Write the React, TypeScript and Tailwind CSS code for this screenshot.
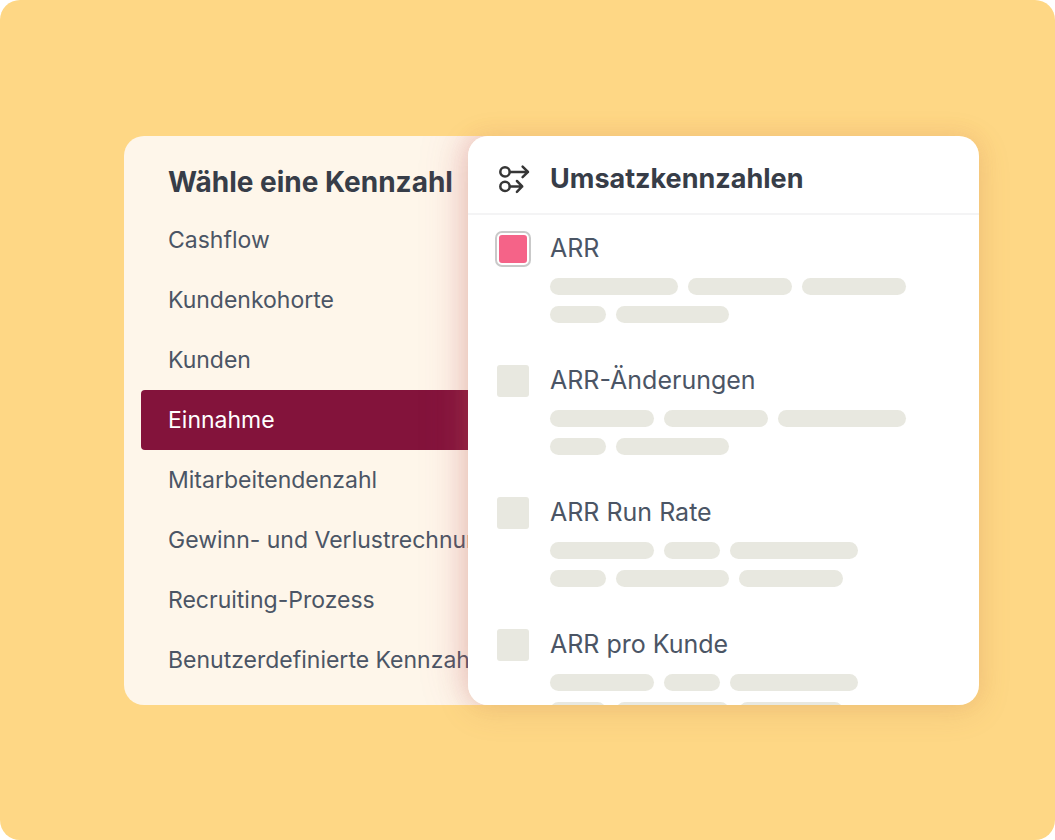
import React from 'react';

const categories = [
  'Cashflow',
  'Kundenkohorte',
  'Kunden',
  'Einnahme',
  'Mitarbeitendenzahl',
  'Gewinn- und Verlustrechnung',
  'Recruiting-Prozess',
  'Benutzerdefinierte Kennzahlen',
];

const bar = {
  s: 'w-14',
  m: 'w-[104px]',
  l: 'w-[113px]',
  xl: 'w-32',
};

type Bar = keyof typeof bar;

const metrics: { id: string; name: string; rows: Bar[][] }[] = [
  { id: 'arr', name: 'ARR', rows: [['xl', 'm', 'm'], ['s', 'l']] },
  { id: 'arr-changes', name: 'ARR-Änderungen', rows: [['m', 'm', 'xl'], ['s', 'l']] },
  { id: 'arr-run-rate', name: 'ARR Run Rate', rows: [['m', 's', 'xl'], ['s', 'l', 'm']] },
  { id: 'arr-customer', name: 'ARR pro Kunde', rows: [['m', 's', 'xl'], ['s', 'l', 'm']] },
];

function FlowIcon() {
  return (
    <svg
      className="h-8 w-8 shrink-0"
      viewBox="0 0 32 32"
      fill="none"
      stroke="#363636"
      strokeWidth="2.5"
      strokeLinecap="round"
      strokeLinejoin="round"
      aria-hidden="true"
    >
      <circle cx="7" cy="8.900" r="4.700" />
      <path d="M12 8.900H30M24.600 3.600l5.400 5.300-5.400 5.300" />
      <circle cx="7" cy="23.400" r="4.700" />
      <path d="M12 23.400H24.200M18.900 18l5.300 5.400-5.300 5.400" />
    </svg>
  );
}

export default function App() {
  const [active, setActive] = React.useState('Einnahme');

  return (
    <main className="min-h-screen overflow-hidden rounded-[20px] bg-[#fed785] pt-[136px] pr-[76px] pb-[135px] pl-[124px] font-['Inter',sans-serif] text-[#4b5565]">
      <div className="flex h-[569px]">
        <nav
          aria-labelledby="nav-title"
          className="relative -mr-5 w-0 flex-[364] overflow-hidden rounded-l-[20px] bg-[#fef6ea]"
        >
          <div className="pl-[17px]">
            <h2
              id="nav-title"
              className="flex h-[74px] items-end pb-2.5 pl-[27px] text-[28px] leading-9 font-bold whitespace-nowrap text-[#373d48]"
            >
              Wähle eine Kennzahl
            </h2>
            <ul>
              {categories.map((name) => (
                <li key={name}>
                  <button
                    type="button"
                    aria-pressed={name === active}
                    onClick={() => setActive(name)}
                    className={
                      name === active
                        ? 'h-[60px] w-full rounded-l bg-[#83133b] pl-[27px] text-left text-[23px] whitespace-nowrap text-white'
                        : 'h-[60px] w-full pl-[27px] text-left text-[23px] whitespace-nowrap'
                    }
                  >
                    {name}
                  </button>
                </li>
              ))}
            </ul>
          </div>
          {/* Rose glow that the metrics panel casts on this one only */}
          <div className="pointer-events-none absolute inset-y-0 -right-20 w-[100px] rounded-[20px] shadow-[0_-6px_48px_rgba(205,75,115,0.26)]" />
        </nav>
        <section
          aria-labelledby="metrics-title"
          className="relative w-0 flex-[511] rounded-[20px] shadow-[0_6px_32px_rgba(170,120,80,0.18),0_-2px_20px_rgba(215,95,90,0.1)]"
        >
          <div className="h-full overflow-hidden rounded-[20px] bg-white">
            <header className="flex h-[79px] items-center gap-5 border-b-2 border-[#f4f4f5] pt-2 pl-[30px]">
              <FlowIcon />
              <h2 id="metrics-title" className="text-[27px] leading-9 font-bold text-[#373d48]">
                Umsatzkennzahlen
              </h2>
            </header>
            <ul>
              {metrics.map((metric, index) => (
                <li key={metric.id} className="flex h-[132px] gap-[21px] pt-[17px] pl-[29px]">
                  <input
                    id={metric.id}
                    type="checkbox"
                    defaultChecked={index === 0}
                    className="mt-px size-8 shrink-0 appearance-none rounded-[3px] bg-[#e8e8e0] checked:rounded-[5px] checked:border-2 checked:border-white checked:bg-[#f56388] checked:ring-2 checked:ring-[#c9c9c9]"
                  />
                  <div>
                    <label htmlFor={metric.id} className="block text-[25px] leading-8">
                      {metric.name}
                    </label>
                    <div className="mt-3.5 flex flex-col gap-[11px]">
                      {metric.rows.map((row, i) => (
                        <div key={i} className="flex gap-2.5">
                          {row.map((size, j) => (
                            <span
                              key={j}
                              className={`h-[17px] rounded-full bg-[#e8e8e0] ${bar[size]}`}
                            />
                          ))}
                        </div>
                      ))}
                    </div>
                  </div>
                </li>
              ))}
            </ul>
          </div>
        </section>
      </div>
    </main>
  );
}
